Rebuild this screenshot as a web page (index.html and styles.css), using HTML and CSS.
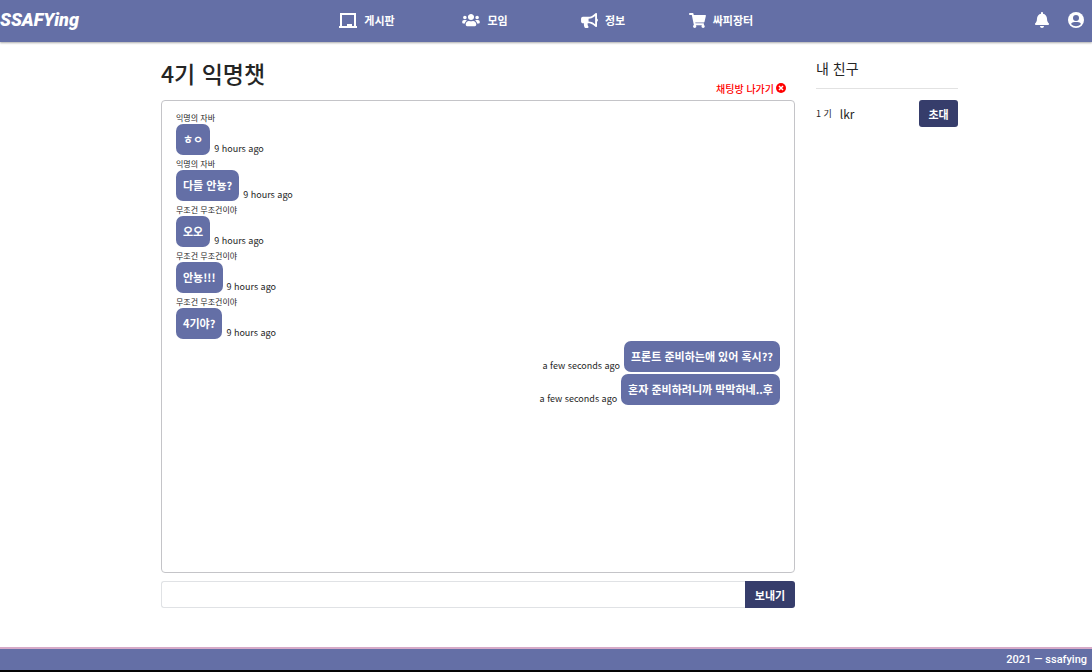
FILE: index.html
```html
<!DOCTYPE html>
<html lang="ko">
<head>
<meta charset="utf-8">
<meta name="viewport" content="width=device-width, initial-scale=1">
<title>SSAFYing</title>
<link rel="stylesheet" href="styles.css">
</head>
<body>
<header class="topbar">
  <a class="logo" href="#">SSAFYing</a>
  <nav class="menu">
    <a href="#"><svg width="18" height="15" viewBox="0 0 18 15"><path d="M1 0h16v13h-2V2H3v11H1zM0 13h8v-2h5v2h5v2H0z"/></svg>게시판</a>
    <a href="#"><svg width="18" height="14" viewBox="0 0 640 512"><path d="M96 224c35.300 0 64-28.700 64-64s-28.700-64-64-64-64 28.700-64 64 28.700 64 64 64zm448 0c35.300 0 64-28.700 64-64s-28.700-64-64-64-64 28.700-64 64 28.700 64 64 64zm32 32h-64c-17.600 0-33.500 7.100-45.100 18.600 40.300 22.100 68.900 62 75.100 109.400h66c17.700 0 32-14.300 32-32v-32c0-35.300-28.700-64-64-64zm-256 0c61.900 0 112-50.100 112-112S381.900 32 320 32 208 82.100 208 144s50.100 112 112 112zm76.800 32h-8.300c-20.800 10-43.900 16-68.500 16s-47.600-6-68.500-16h-8.300C179.600 288 128 339.600 128 403.200V432c0 26.500 21.500 48 48 48h288c26.500 0 48-21.500 48-48v-28.800c0-63.600-51.600-115.200-115.200-115.200zm-223.700-13.400C161.500 263.100 145.600 256 128 256H64c-35.300 0-64 28.700-64 64v32c0 17.700 14.300 32 32 32h65.900c6.300-47.400 34.900-87.300 75.200-109.400z"/></svg>모임</a>
    <a href="#"><svg width="17" height="15" viewBox="0 0 576 512"><path d="M576 240c0-23.600-13-44-32-55.100V32c0-8.700-7-32-32-32-7.100 0-14.200 2.400-20 7l-85 68c-42.700 34.200-96.300 53-151 53H64c-35.300 0-64 28.700-64 64v96c0 35.300 28.700 64 64 64h33.700c-1.400 10.500-2.200 21.100-2.200 32 0 39.800 9.300 77.400 25.600 110.900 5.200 10.700 16.500 17.100 28.400 17.100h74.300c26.100 0 41.700-29.800 25.900-50.600-16.400-21.500-26.200-48.300-26.200-77.400 0-11.100 1.600-21.800 4.400-32H256c54.700 0 108.300 18.800 151 53l85 68c5.700 4.500 12.700 7 20 7 24.900 0 32-22.800 32-32V295.100c19-11.100 32-31.500 32-55.100zm-96 141.400-33-26.500C393 311.800 325.100 288 256 288v-96c69.100 0 137-23.800 191-66.900l33-26.500v282.800z"/></svg>정보</a>
    <a href="#"><svg width="17" height="15" viewBox="0 0 576 512"><path d="m528.100 301.300 47.300-208C578.800 78.300 567.400 64 552 64H159.200l-9.200-44.800C147.800 8 137.900 0 126.500 0H24C10.700 0 0 10.700 0 24v16c0 13.300 10.700 24 24 24h69.900l70.200 343.400C147.300 417.100 136 435.200 136 456c0 30.900 25.100 56 56 56s56-25.100 56-56c0-15.700-6.400-29.800-16.800-40h209.600C430.400 426.200 424 440.300 424 456c0 30.900 25.100 56 56 56s56-25.100 56-56c0-22.200-12.900-41.300-31.600-50.400l5.500-24.300c3.400-15-8-29.300-23.400-29.300H218.100l-6.500-32h293.100c11.200 0 20.900-7.800 23.400-18.700z"/></svg>싸피장터</a>
  </nav>
  <div class="tools">
    <button type="button" aria-label="알림"><svg width="14" height="16" viewBox="0 0 448 512"><path d="M224 512c35.300 0 64-28.700 64-64H160c0 35.300 28.600 64 64 64zm215.400-149.700c-19.300-20.800-55.500-52-55.500-154.300 0-77.700-54.500-139.900-127.900-155.200V32c0-17.700-14.300-32-32-32s-32 14.300-32 32v20.800C118.600 68.100 64.100 130.300 64.100 208c0 102.300-36.200 133.500-55.500 154.300-6 6.500-8.700 14.200-8.600 21.700.1 16.400 13 32 32.100 32h383.800c19.100 0 32-15.600 32.100-32 .1-7.500-2.600-15.200-8.600-21.700z"/></svg></button>
    <button type="button" aria-label="내 정보"><svg width="16" height="16" viewBox="0 0 16 16"><circle cx="8" cy="8" r="8"/><circle class="cut" cx="8" cy="6" r="3"/><path class="cut" d="M3 12c1-2 3-2 5-2s4 0 5 2c-3 3-7 3-10 0z"/></svg></button>
  </div>
</header>

<main class="content">
  <section class="room">
    <div class="room-head">
      <h1>4기 익명챗</h1>
      <button class="leave" type="button">채팅방 나가기<svg width="10" height="10" viewBox="0 0 10 10"><circle cx="5" cy="5" r="5"/><path d="m3 3 4 4m0-4L3 7"/></svg></button>
    </div>
    <div class="chat">
      <article class="message"><div class="author">익명의 자바</div><div class="line"><p class="bubble">ㅎㅇ</p><time>9 hours ago</time></div></article>
      <article class="message"><div class="author">익명의 자바</div><div class="line"><p class="bubble">다들 안뇽?</p><time>9 hours ago</time></div></article>
      <article class="message"><div class="author">무조건 무조건이야</div><div class="line"><p class="bubble">오오</p><time>9 hours ago</time></div></article>
      <article class="message"><div class="author">무조건 무조건이야</div><div class="line"><p class="bubble">안뇽!!!</p><time>9 hours ago</time></div></article>
      <article class="message"><div class="author">무조건 무조건이야</div><div class="line"><p class="bubble">4기야?</p><time>9 hours ago</time></div></article>
      <article class="message"><div class="line mine"><p class="bubble">프론트 준비하는애 있어 혹시??</p><time>a few seconds ago</time></div></article>
      <article class="message"><div class="line mine"><p class="bubble">혼자 준비하려니까 막막하네..후</p><time>a few seconds ago</time></div></article>
    </div>
    <form class="composer">
      <input type="text" aria-label="메시지">
      <button type="button">보내기</button>
    </form>
  </section>
  <aside class="friends">
    <h2>내 친구</h2>
    <div class="friend"><small>1 기</small><span>lkr</span><button type="button">초대</button></div>
  </aside>
</main>

<footer class="footer">2021 — ssafying</footer>
</body>
</html>
```
FILE: styles.css
```css
* { box-sizing: border-box; }

body {
  display: flex;
  flex-direction: column;
  min-height: 100vh;
  margin: 0;
  background: #fff;
  color: #252525;
  font-family: "Noto Sans CJK KR", sans-serif;
}

h1, h2, p { margin: 0; }

button {
  padding: 0;
  border: 0;
  background: none;
  color: inherit;
  font: inherit;
}

.topbar {
  display: grid;
  grid-template-columns: 1fr 472px 1fr;
  align-items: center;
  height: 42px;
  padding-bottom: 2px;
  background: #646fa6;
  color: #fff;
  box-shadow: 0 1px 2px #aaa;
}

.topbar svg { fill: currentColor; }

.logo {
  color: #fff;
  font: italic 900 18px/40px Roboto, sans-serif;
  text-decoration: none;
}

.menu {
  display: grid;
  grid-template-columns: repeat(4, 1fr);
  margin-left: -2px;
  margin-right: 2px;
}

.menu a {
  display: flex;
  align-items: center;
  justify-content: center;
  gap: 7px;
  color: #fff;
  font-size: 11px;
  font-weight: 700;
  line-height: 40px;
  text-decoration: none;
}

.tools {
  display: flex;
  justify-content: flex-end;
  gap: 19px;
  padding-right: 8px;
}

.tools button { display: flex; }
.tools .cut { fill: #646fa6; }

.content {
  display: grid;
  grid-template-columns: minmax(0, 1fr) 142px;
  gap: 21px;
  flex: 1;
  padding: 16px 134px 39px 161px;
}

.room {
  display: flex;
  flex-direction: column;
}

.room-head {
  display: flex;
  justify-content: space-between;
  height: 42px;
}

h1 {
  font-size: 23px;
  font-weight: 500;
  line-height: 31px;
}

.leave {
  display: flex;
  align-items: center;
  align-self: flex-end;
  gap: 2px;
  height: 24px;
  padding-right: 9px;
  color: #f00;
  font-size: 10px;
  font-weight: 500;
}

.leave svg { fill: #f00; stroke: #fff; stroke-width: 1.5; }
.leave circle { stroke: none; }

.chat {
  flex: 1;
  padding: 10px 14px;
  border: 1px solid #c4c4c8;
  border-radius: 4px;
}

.message { padding-bottom: 2px; }

.author {
  font-size: 8px;
  line-height: 13px;
}

.line {
  display: flex;
  align-items: flex-end;
  gap: 4px;
}

.mine { flex-direction: row-reverse; }

.bubble {
  padding: 0 7px;
  border-radius: 7px;
  background: #646fa6;
  color: #fff;
  font-size: 11px;
  font-weight: 700;
  line-height: 31px;
}

time {
  font-size: 9px;
  line-height: 12px;
}

.composer {
  display: flex;
  height: 27px;
  margin-top: 8px;
}

.composer input {
  flex: 1;
  min-width: 0;
  padding: 0 8px;
  border: 1px solid #e0e2e5;
  border-right: 0;
  border-radius: 3px 0 0 3px;
  font-size: 12px;
}

.composer button {
  width: 50px;
  border-radius: 0 3px 3px 0;
  background: #363d6b;
  color: #fff;
  font-size: 11px;
  font-weight: 700;
}

.friends h2 {
  padding-bottom: 10px;
  border-bottom: 1px solid #e2e2e2;
  font-size: 14px;
  font-weight: 400;
  line-height: 20px;
}

.friend {
  display: flex;
  align-items: center;
  gap: 8px;
  margin-top: 11px;
  font-size: 12px;
}

.friend small { font-size: 9px; }

.friend button {
  width: 39px;
  height: 27px;
  margin-left: auto;
  border-radius: 3px;
  background: #363d6b;
  color: #fff;
  font-size: 11px;
  font-weight: 700;
}

.footer {
  padding-right: 5px;
  border-top: 2px solid #d6aac8;
  border-bottom: 2px solid #050505;
  background: #646fa6;
  color: #fff;
  font: 500 11px/21px Roboto, sans-serif;
  text-align: right;
}
```
